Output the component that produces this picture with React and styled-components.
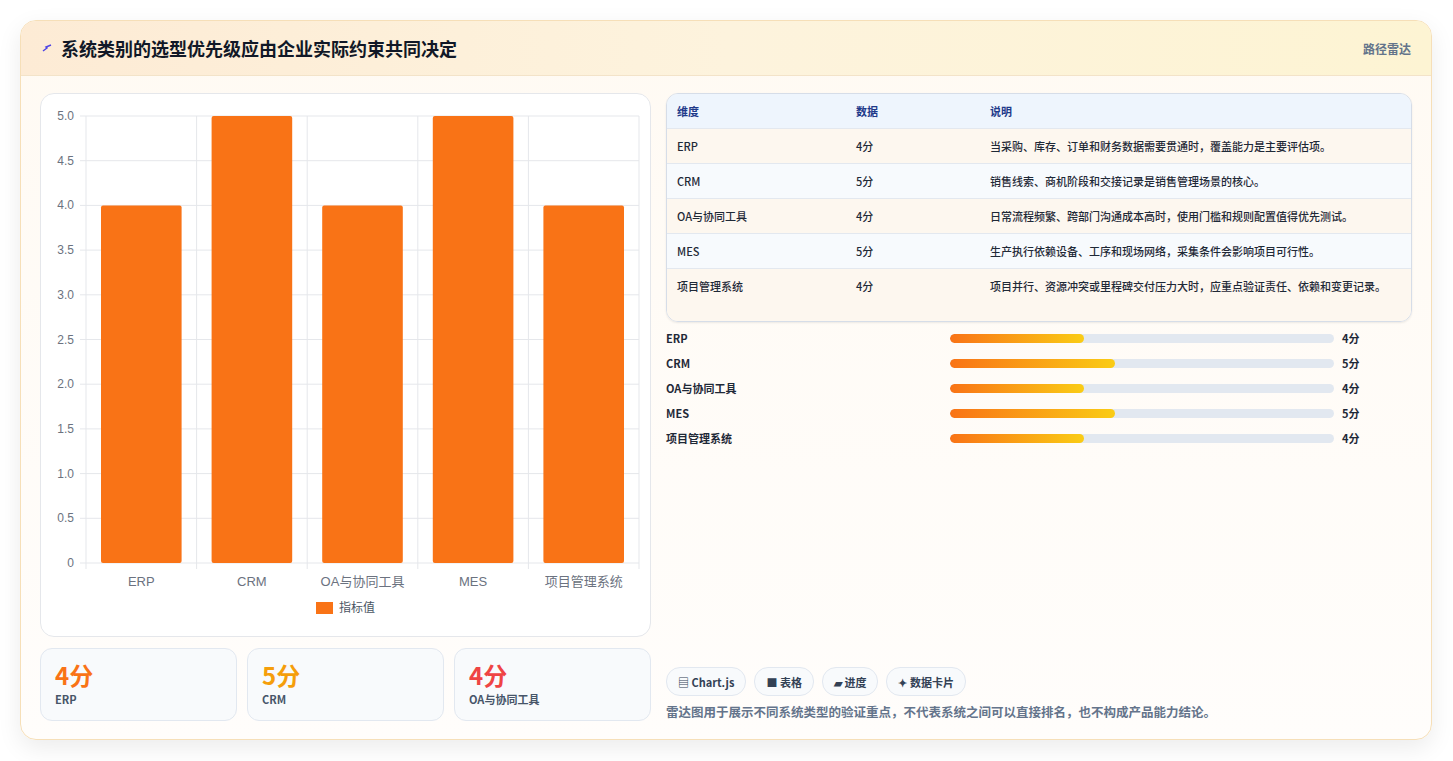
import React from 'react';
import styled, { createGlobalStyle } from 'styled-components';

const Global = createGlobalStyle`
  body { margin: 0; background: #fff; font-family: "Noto Sans CJK SC", "Noto Sans", sans-serif; }
`;

const Page = styled.div`
  padding: 20px 21px 21px 20px;
`;

const Card = styled.div`
  border: 1px solid #f6dfb8;
  border-radius: 16px;
  background: linear-gradient(180deg, #fffaf3 0%, #fffdfb 100%);
  box-shadow: 0 8px 24px rgba(0,0,0,0.08);
  overflow: hidden;
`;

const Header = styled.div`
  height: 54px;
  display: flex;
  align-items: center;
  justify-content: space-between;
  padding: 0 20px;
  background: linear-gradient(90deg, #fdebd5 0%, #fdf3dd 50%, #fdf4d3 100%);
  border-bottom: 1px solid #f3e3c9;
`;

const Title = styled.h1`
  margin: 0;
  font-size: 18px;
  font-weight: 700;
  color: #111827;
  display: flex;
  align-items: center;
  gap: 8px;
`;

const Tag = styled.span`
  font-size: 12px;
  color: #64748b;
  font-weight: 600;
`;

const Body = styled.div`
  display: grid;
  grid-template-columns: 611px 1fr;
  gap: 15px;
  padding: 17px 19px 18px 19px;
`;

const Col = styled.div`
  display: flex;
  flex-direction: column;
  gap: 11px;
`;

const ChartBox = styled.div`
  height: 544px;
  background: #fff;
  border: 1px solid #e5e7eb;
  border-radius: 14px;
  box-sizing: border-box;
`;

const Stats = styled.div`
  display: grid;
  grid-template-columns: repeat(3, 1fr);
  gap: 10px;
`;

const Stat = styled.div`
  height: 73px;
  box-sizing: border-box;
  border: 1px solid #e2e8f0;
  border-radius: 12px;
  background: #f8fafc;
  padding: 10px 14px;
`;

const StatValue = styled.div`
  font-size: 24px;
  font-weight: 700;
  color: ${p => p.color};
  line-height: 32px;
`;

const StatLabel = styled.div`
  font-size: 11px;
  font-weight: 700;
  color: #475569;
`;

const Table = styled.div`
  border: 1px solid #d6dde8;
  border-radius: 12px;
  overflow: hidden;
  font-size: 11px;
  color: #1f2937;
  box-shadow: 0 1px 2px rgba(0,0,0,0.08);
`;

const Row = styled.div`
  display: grid;
  grid-template-columns: 179px 134px 1fr;
  padding: 0 10px;
  min-height: 34px;
  align-items: center;
  background: ${p => (p.head ? '#eef5fd' : p.alt ? '#f7fafd' : '#fdf7ef')};
  color: ${p => (p.head ? '#1e3a8a' : '#1f2937')};
  font-weight: ${p => (p.head ? 700 : 500)};
  border-top: ${p => (p.head ? 'none' : '1px solid #e3e8ef')};
  padding-top: ${p => (p.tall ? '9px' : '0')};
  padding-bottom: ${p => (p.tall ? '9px' : '0')};
  align-items: ${p => (p.tall ? 'start' : 'center')};
  line-height: 16px;
`;

const Bars = styled.div`
  display: flex;
  flex-direction: column;
  gap: 9px;
  margin-top: 8px;
`;

const BarRow = styled.div`
  display: grid;
  grid-template-columns: 284px 392px 1fr;
  align-items: center;
  gap: 0;
  font-size: 11px;
  font-weight: 700;
  color: #1f2937;
  height: 16px;
`;

const Track = styled.div`
  height: 9px;
  background: #e2e8f0;
  border-radius: 5px;
  overflow: hidden;
  margin-right: 8px;
`;

const Fill = styled.div`
  height: 100%;
  border-radius: 5px;
  background: linear-gradient(90deg, #f97316, #facc15);
`;

const Spacer = styled.div`
  flex: 1;
`;

const Chips = styled.div`
  display: flex;
  gap: 8px;
`;

const Chip = styled.span`
  height: 27px;
  padding: 0 11px;
  display: inline-flex;
  align-items: center;
  gap: 4px;
  border: 1px solid #e2e8f0;
  border-radius: 14px;
  background: #f8fafc;
  font-size: 11px;
  font-weight: 700;
  color: #334155;
`;

const Note = styled.p`
  margin: 6px 0 0;
  font-size: 12.5px;
  font-weight: 600;
  color: #64748b;
`;

const cats = ['ERP', 'CRM', 'OA与协同工具', 'MES', '项目管理系统'];
const vals = [4, 5, 4, 5, 4];
const desc = [
  '当采购、库存、订单和财务数据需要贯通时，覆盖能力是主要评估项。',
  '销售线索、商机阶段和交接记录是销售管理场景的核心。',
  '日常流程频繁、跨部门沟通成本高时，使用门槛和规则配置值得优先测试。',
  '生产执行依赖设备、工序和现场网络，采集条件会影响项目可行性。',
  '项目并行、资源冲突或里程碑交付压力大时，应重点验证责任、依赖和变更记录。',
];

const BarChart = () => {
  const x0 = 45, x1 = 598, yTop = 22, yBot = 469;
  const step = (x1 - x0) / 5;
  const ticks = [0, 0.5, 1, 1.5, 2, 2.5, 3, 3.5, 4, 4.5, 5];
  const y = v => yBot - (v / 5) * (yBot - yTop);
  return (
    <svg width="609" height="542" style={{ display: 'block' }}>
      <g fontFamily="Liberation Sans, sans-serif" fontSize="12" fill="#6b7280">
        {ticks.map(t => (
          <g key={t}>
            <line x1={x0 - 6} x2={x1} y1={y(t)} y2={y(t)} stroke="#e5e7eb" />
            <text x={x0 - 12} y={y(t) + 4} textAnchor="end">{t === 0 ? '0' : t.toFixed(1)}</text>
          </g>
        ))}
        {[0, 1, 2, 3, 4, 5].map(i => (
          <line key={i} x1={x0 + i * step} x2={x0 + i * step} y1={yTop} y2={yBot + 6} stroke="#e5e7eb" />
        ))}
        {vals.map((v, i) => (
          <rect key={i} x={x0 + i * step + 15} y={y(v)} width={step - 30} height={yBot - y(v)} rx="2" fill="#f97316" />
        ))}
        {cats.map((c, i) => (
          <text key={c} x={x0 + i * step + step / 2} y={yBot + 23} textAnchor="middle" fontSize="13" fontFamily="Liberation Sans, Noto Sans CJK SC, sans-serif">{c}</text>
        ))}
        <rect x="275" y="508" width="17" height="12" fill="#f97316" />
        <text x="298" y="518" fontSize="12" fill="#4b5563" fontFamily="Noto Sans CJK SC, sans-serif">指标值</text>
      </g>
    </svg>
  );
};

const App = () => (
  <>
    <Global />
    <Page>
      <Card>
        <Header>
          <Title>
            <svg width="12" height="12" viewBox="0 0 12 12">
              <path d="M2 9 L6 6 L5 5 L10 3" stroke="#4f46e5" strokeWidth="1.5" fill="none" />
            </svg>
            系统类别的选型优先级应由企业实际约束共同决定
          </Title>
          <Tag>路径雷达</Tag>
        </Header>
        <Body>
          <Col>
            <ChartBox><BarChart /></ChartBox>
            <Stats>
              <Stat><StatValue color="#f97316">4分</StatValue><StatLabel>ERP</StatLabel></Stat>
              <Stat><StatValue color="#f59e0b">5分</StatValue><StatLabel>CRM</StatLabel></Stat>
              <Stat><StatValue color="#ef4444">4分</StatValue><StatLabel>OA与协同工具</StatLabel></Stat>
            </Stats>
          </Col>
          <Col style={{ gap: 0 }}>
            <Table>
              <Row head><span>维度</span><span>数据</span><span>说明</span></Row>
              {cats.map((c, i) => (
                <Row key={c} alt={i % 2 === 1} tall={i === 4}>
                  <span>{c}</span><span>{vals[i]}分</span><span>{desc[i]}</span>
                </Row>
              ))}
            </Table>
            <Bars>
              {cats.map((c, i) => (
                <BarRow key={c}>
                  <span>{c}</span>
                  <Track><Fill style={{ width: vals[i] === 5 ? '43%' : '35%' }} /></Track>
                  <span>{vals[i]}分</span>
                </BarRow>
              ))}
            </Bars>
            <Spacer />
            <Chips>
              <Chip>▤ Chart.js</Chip>
              <Chip>■ 表格</Chip>
              <Chip>▰ 进度</Chip>
              <Chip>✦ 数据卡片</Chip>
            </Chips>
            <Note>雷达图用于展示不同系统类型的验证重点，不代表系统之间可以直接排名，也不构成产品能力结论。</Note>
          </Col>
        </Body>
      </Card>
    </Page>
  </>
);

export default App;
